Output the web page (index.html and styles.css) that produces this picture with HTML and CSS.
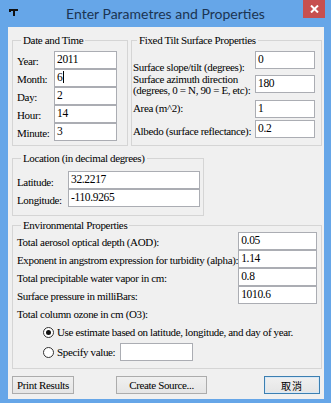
FILE: index.html
```html
<!DOCTYPE html>
<html lang="en">
<head>
    <meta charset="UTF-8">
    <title>Enter Parametres and Properties</title>
    <link rel="stylesheet" href="styles.css">
</head>
<body>
    <div class="window">
        <div class="titlebar">
            <svg class="app-icon" width="9" height="7" viewBox="0 0 9 7">
                <path d="M0 0H9V2H6V7H4V2H2V3H0Z" fill="#111"/>
            </svg>
            <div class="title">Enter Parametres and Properties</div>
            <div class="close-btn">
                <svg width="9" height="8" viewBox="0 0 9 8">
                    <path d="M1 0.5L8 7.5M8 0.5L1 7.5" stroke="#fff" stroke-width="2"/>
                </svg>
            </div>
        </div>

        <div class="client">
            <div class="top-row">
                <fieldset class="group group-date">
                    <legend>Date and Time</legend>
                    <div class="date-grid">
                        <label>Year:</label><div class="textbox">2011</div>
                        <label>Month:</label><div class="textbox">6<span class="caret"></span></div>
                        <label>Day:</label><div class="textbox">2</div>
                        <label>Hour:</label><div class="textbox">14</div>
                        <label>Minute:</label><div class="textbox">3</div>
                    </div>
                </fieldset>

                <fieldset class="group group-tilt">
                    <legend>Fixed Tilt Surface Properties</legend>
                    <div class="tilt-row row-slope">
                        <label>Surface slope/tilt (degrees):</label><div class="textbox">0</div>
                    </div>
                    <div class="tilt-row row-azimuth">
                        <label>Surface azimuth direction<br>(degrees, 0 = N, 90 = E, etc):</label><div class="textbox">180</div>
                    </div>
                    <div class="tilt-row row-area">
                        <label>Area (m^2):</label><div class="textbox">1</div>
                    </div>
                    <div class="tilt-row row-albedo">
                        <label>Albedo (surface reflectance):</label><div class="textbox">0.2</div>
                    </div>
                </fieldset>
            </div>

            <fieldset class="group group-location">
                <legend>Location (in decimal degrees)</legend>
                <div class="location-grid">
                    <label>Latitude:</label><div class="textbox">32.2217</div>
                    <label>Longitude:</label><div class="textbox">-110.9265</div>
                </div>
            </fieldset>

            <fieldset class="group group-env">
                <legend>Environmental Properties</legend>
                <div class="env-grid">
                    <label>Total aerosol optical depth (AOD):</label><div class="textbox">0.05</div>
                    <label>Exponent in angstrom expression for turbidity (alpha):</label><div class="textbox">1.14</div>
                    <label>Total precipitable water vapor in cm:</label><div class="textbox">0.8</div>
                    <label>Surface pressure in milliBars:</label><div class="textbox">1010.6</div>
                    <label class="span-all">Total column ozone in cm (O3):</label>
                </div>
                <div class="radio-row">
                    <span class="radio checked"></span>
                    <span>Use estimate based on latitude, longitude, and day of year.</span>
                </div>
                <div class="radio-row">
                    <span class="radio"></span>
                    <span>Specify value:</span>
                    <div class="textbox ozone-box"></div>
                </div>
            </fieldset>

            <div class="button-row">
                <button class="btn btn-print">Print Results</button>
                <button class="btn btn-create">Create Source...</button>
                <button class="btn btn-cancel default">取消</button>
            </div>
        </div>
    </div>
</body>
</html>
```

FILE: styles.css
```css
body {
    margin: 0;
    background-color: #ffffff;
    font-family: 'Liberation Serif', 'Times New Roman', serif;
    font-size: 11px;
    letter-spacing: -0.35px;
    color: #000;
}
.window {
    width: 331px;
    height: 403px;
    background-color: #66a6e8;
    display: flex;
    flex-direction: column;
}
.titlebar {
    height: 27px;
    display: grid;
    grid-template-columns: 1fr auto 1fr;
}
.app-icon {
    margin: 9px 0 0 9px;
    justify-self: start;
}
.title {
    font-family: Lato, 'Open Sans', sans-serif;
    font-size: 14px;
    letter-spacing: 0;
    line-height: 28px;
    color: #1b3452;
}
.close-btn {
    justify-self: end;
    width: 22px;
    height: 18px;
    margin-right: 6px;
    background-color: #c75050;
    display: flex;
    align-items: center;
    justify-content: center;
}
.client {
    flex: 1;
    margin: 0 7px 4px 8px;
    background-color: #f0f0f0;
    padding: 7px 0 0 4px;
}

/* group boxes */
.group {
    margin: 0;
    border: 1px solid #d5d5d5;
    box-sizing: border-box;
    min-width: 0;
}
.group legend {
    padding: 0 2px;
    margin-left: 4px;
    line-height: 12px;
}
label {
    white-space: nowrap;
    line-height: 13px;
}
.textbox {
    background-color: #fff;
    border: 1px solid #abadb3;
    box-sizing: border-box;
    height: 18px;
    padding: 1px 2px 0;
    line-height: 13px;
    font-size: 11.5px;
    white-space: nowrap;
}
.caret {
    display: inline-block;
    width: 1px;
    height: 12px;
    background-color: #000;
    vertical-align: -2px;
    margin-left: 1px;
}

.top-row {
    display: flex;
    gap: 3px;
}
.group-date {
    width: 116px;
    height: 112px;
    padding: 5px 10px 0 4px;
}
.date-grid {
    display: grid;
    grid-template-columns: 1fr 63px;
    grid-auto-rows: 18px;
}
.date-grid label {
    align-self: center;
    padding-top: 3px;
}

.group-tilt {
    width: 191px;
    height: 112px;
    padding: 5px 6px 0 1px;
}
.tilt-row {
    display: flex;
    justify-content: space-between;
    align-items: flex-start;
}
.tilt-row .textbox {
    width: 60px;
}
.row-slope {
    height: 24px;
}
.row-slope label {
    padding-top: 10px;
}
.row-azimuth {
    height: 25px;
}
.row-azimuth label {
    line-height: 11px;
    margin-top: -1px;
}
.row-area {
    height: 20px;
}
.row-area label {
    padding-top: 2px;
}
.row-albedo label {
    padding-top: 5px;
}

.group-location {
    margin-top: 6px;
    width: 192px;
    height: 64px;
    padding: 7px 3px 0 4px;
}
.location-grid {
    display: grid;
    grid-template-columns: 1fr 132px;
    grid-auto-rows: 18px;
}
.location-grid label {
    align-self: center;
    padding-top: 4px;
}

.group-env {
    margin-top: 3px;
    width: 310px;
    height: 150px;
    padding: 1px 5px 0 4px;
}
.env-grid {
    display: grid;
    grid-template-columns: 1fr 79px;
    grid-auto-rows: 18px;
}
.env-grid label {
    padding-top: 4px;
}
.env-grid .span-all {
    grid-column: 1 / -1;
}
.radio-row {
    height: 20px;
    display: flex;
    align-items: center;
    gap: 3px;
    padding-left: 26px;
}
.radio-row:first-of-type {
    margin-top: 4px;
}
.radio {
    width: 11px;
    height: 11px;
    border: 1px solid #333;
    border-radius: 50%;
    box-sizing: border-box;
    background-color: #fff;
    display: flex;
    align-items: center;
    justify-content: center;
}
.radio.checked::after {
    content: "";
    width: 5px;
    height: 5px;
    border-radius: 50%;
    background-color: #111;
}
.ozone-box {
    width: 73px;
    margin-left: 2px;
}

.button-row {
    display: flex;
    margin-top: 7px;
}
.btn {
    height: 18px;
    padding: 0;
    font-family: 'Liberation Serif', 'Noto Sans CJK TC', serif;
    font-size: 11px;
    letter-spacing: -0.35px;
    color: #000;
    background: linear-gradient(#f0f0f0, #e5e5e5);
    border: 1px solid #acacac;
}
.btn-print {
    width: 62px;
}
.btn-create {
    width: 91px;
    margin-left: 42px;
}
.btn-cancel {
    width: 56px;
    margin-left: 57px;
    font-family: 'Noto Sans CJK TC', sans-serif;
    font-size: 10px;
    letter-spacing: 1px;
}
.btn.default {
    border-color: #3c7fb1;
    box-shadow: inset 0 0 0 1px #d8e8f6;
}
```
